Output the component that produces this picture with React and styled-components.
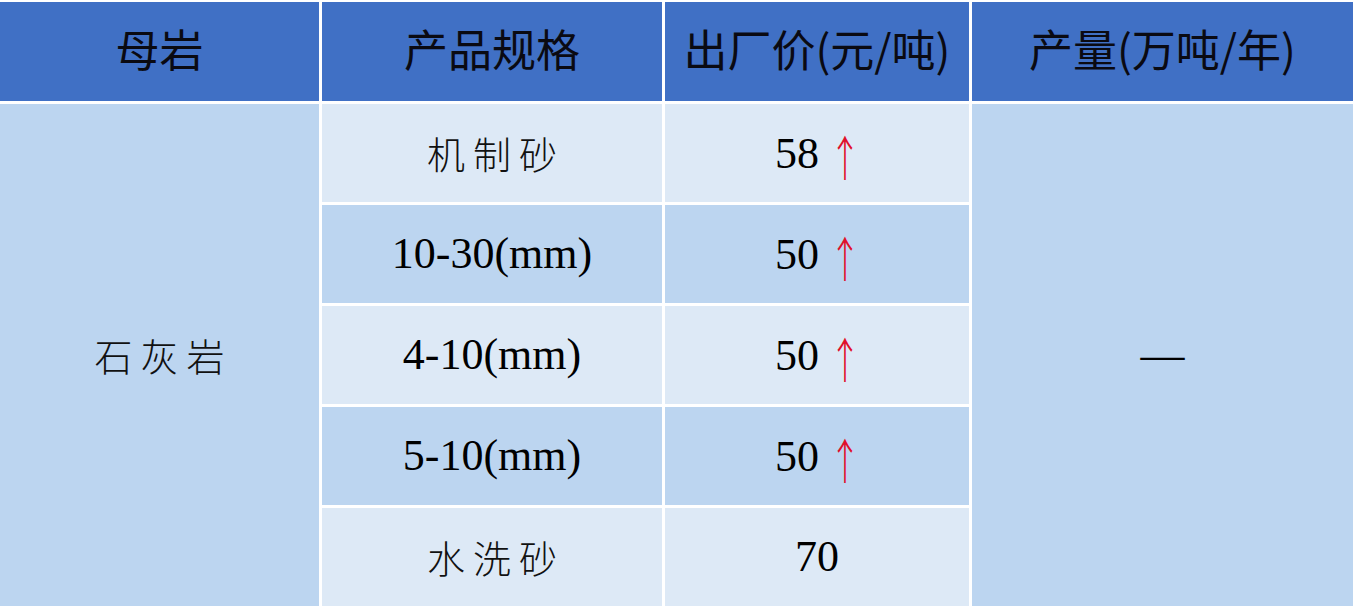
import React from "react";
import styled, { createGlobalStyle } from "styled-components";

const GlobalStyle = createGlobalStyle`
  html, body {
    margin: 0;
    padding: 0;
    background: #ffffff;
  }
`;

const rows = [
  { spec: "机制砂", cjk: true, price: "58", up: true },
  { spec: "10-30(mm)", cjk: false, price: "50", up: true },
  { spec: "4-10(mm)", cjk: false, price: "50", up: true },
  { spec: "5-10(mm)", cjk: false, price: "50", up: true },
  { spec: "水洗砂", cjk: true, price: "70", up: false },
];

const tones = {
  head: "#4070c5",
  side: "#bcd5f0",
  light: "#dde9f6",
  dark: "#bcd5f0",
};

const App = () => {
  return (
    <>
      <GlobalStyle />
      <Table>
        <HeadCell>母岩</HeadCell>
        <HeadCell>产品规格</HeadCell>
        <HeadCell>出厂价(元/吨)</HeadCell>
        <HeadCell>产量(万吨/年)</HeadCell>

        <Cell $tone="side" $col={1} $row="2 / span 5">
          <CjkText>石灰岩</CjkText>
        </Cell>
        {rows.map((r, i) => (
          <React.Fragment key={i}>
            <Cell $tone={i % 2 === 0 ? "light" : "dark"} $col={2} $row={i + 2}>
              {r.cjk ? <CjkText>{r.spec}</CjkText> : <NumText>{r.spec}</NumText>}
            </Cell>
            <Cell $tone={i % 2 === 0 ? "light" : "dark"} $col={3} $row={i + 2}>
              <NumText>
                {r.price}
                {r.up && <Arrow>↑</Arrow>}
              </NumText>
            </Cell>
          </React.Fragment>
        ))}
        <Cell $tone="side" $col={4} $row="2 / span 5">
          <Dash>—</Dash>
        </Cell>
      </Table>
    </>
  );
};

const Table = styled.div`
  display: grid;
  grid-template-columns: 319px 340px 304px 381px;
  grid-template-rows: 99px repeat(5, 98px);
  gap: 3px;
  padding: 2px 3px 4px 0;
  background: #ffffff;
`;

const HeadCell = styled.div`
  display: flex;
  justify-content: center;
  align-items: center;
  padding-bottom: 8px;
  background: ${tones.head};
  color: #0a0a12;
  font-family: "Noto Sans CJK SC", "Noto Sans", sans-serif;
  font-size: 44px;
  line-height: 1;
`;

const Cell = styled.div`
  display: flex;
  justify-content: center;
  align-items: center;
  grid-column: ${(p) => p.$col};
  grid-row: ${(p) => p.$row};
  background: ${(p) => tones[p.$tone]};
`;

const CjkText = styled.span`
  font-family: "Noto Sans CJK SC", sans-serif;
  font-weight: 300;
  font-size: 38px;
  letter-spacing: 8px;
  margin-right: -8px;
  color: #111;
  line-height: 1;
`;

const NumText = styled.span`
  display: inline-flex;
  align-items: baseline;
  font-family: "Liberation Serif", "Times New Roman", serif;
  font-size: 44px;
  color: #000;
  line-height: 1;
  white-space: pre;
`;

const Arrow = styled.span`
  display: inline-block;
  position: relative;
  top: 5px;
  margin-left: 6px;
  margin-right: -6px;
  color: #e0102a;
  font-family: "Noto Sans CJK SC", sans-serif;
  font-weight: 300;
  font-size: 40px;
  transform: scale(0.8, 1.2);
`;

const Dash = styled.span`
  font-family: "Liberation Serif", serif;
  font-size: 44px;
  color: #000;
  line-height: 1;
`;

export default App;
